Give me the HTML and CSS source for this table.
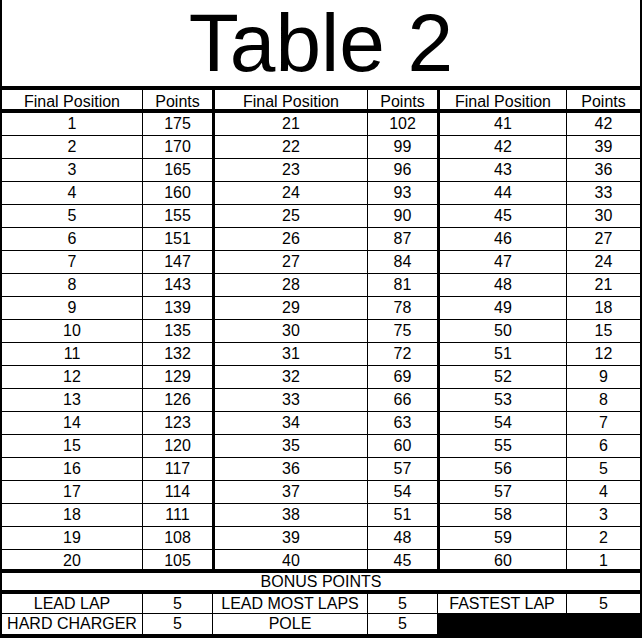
FILE: index.html
```html
<!DOCTYPE html>
<html>
<head>
<meta charset="utf-8">
<title>Table 2</title>
<link rel="stylesheet" href="styles.css">
</head>
<body>
<div class="sheet">
  <div class="title"><span class="title-text">Table 2</span></div>
  <div class="grid">
    <div class="cell hd">Final Position</div><div class="cell hd">Points</div><div class="cell hd gl">Final Position</div><div class="cell hd">Points</div><div class="cell hd gl">Final Position</div><div class="cell hd">Points</div>
    <div class="cell">1</div><div class="cell">175</div><div class="cell gl">21</div><div class="cell">102</div><div class="cell gl">41</div><div class="cell">42</div>
    <div class="cell">2</div><div class="cell">170</div><div class="cell gl">22</div><div class="cell">99</div><div class="cell gl">42</div><div class="cell">39</div>
    <div class="cell">3</div><div class="cell">165</div><div class="cell gl">23</div><div class="cell">96</div><div class="cell gl">43</div><div class="cell">36</div>
    <div class="cell">4</div><div class="cell">160</div><div class="cell gl">24</div><div class="cell">93</div><div class="cell gl">44</div><div class="cell">33</div>
    <div class="cell">5</div><div class="cell">155</div><div class="cell gl">25</div><div class="cell">90</div><div class="cell gl">45</div><div class="cell">30</div>
    <div class="cell">6</div><div class="cell">151</div><div class="cell gl">26</div><div class="cell">87</div><div class="cell gl">46</div><div class="cell">27</div>
    <div class="cell">7</div><div class="cell">147</div><div class="cell gl">27</div><div class="cell">84</div><div class="cell gl">47</div><div class="cell">24</div>
    <div class="cell">8</div><div class="cell">143</div><div class="cell gl">28</div><div class="cell">81</div><div class="cell gl">48</div><div class="cell">21</div>
    <div class="cell">9</div><div class="cell">139</div><div class="cell gl">29</div><div class="cell">78</div><div class="cell gl">49</div><div class="cell">18</div>
    <div class="cell">10</div><div class="cell">135</div><div class="cell gl">30</div><div class="cell">75</div><div class="cell gl">50</div><div class="cell">15</div>
    <div class="cell">11</div><div class="cell">132</div><div class="cell gl">31</div><div class="cell">72</div><div class="cell gl">51</div><div class="cell">12</div>
    <div class="cell">12</div><div class="cell">129</div><div class="cell gl">32</div><div class="cell">69</div><div class="cell gl">52</div><div class="cell">9</div>
    <div class="cell">13</div><div class="cell">126</div><div class="cell gl">33</div><div class="cell">66</div><div class="cell gl">53</div><div class="cell">8</div>
    <div class="cell">14</div><div class="cell">123</div><div class="cell gl">34</div><div class="cell">63</div><div class="cell gl">54</div><div class="cell">7</div>
    <div class="cell">15</div><div class="cell">120</div><div class="cell gl">35</div><div class="cell">60</div><div class="cell gl">55</div><div class="cell">6</div>
    <div class="cell">16</div><div class="cell">117</div><div class="cell gl">36</div><div class="cell">57</div><div class="cell gl">56</div><div class="cell">5</div>
    <div class="cell">17</div><div class="cell">114</div><div class="cell gl">37</div><div class="cell">54</div><div class="cell gl">57</div><div class="cell">4</div>
    <div class="cell">18</div><div class="cell">111</div><div class="cell gl">38</div><div class="cell">51</div><div class="cell gl">58</div><div class="cell">3</div>
    <div class="cell">19</div><div class="cell">108</div><div class="cell gl">39</div><div class="cell">48</div><div class="cell gl">59</div><div class="cell">2</div>
    <div class="cell last">20</div><div class="cell last">105</div><div class="cell last gl">40</div><div class="cell last">45</div><div class="cell last gl">60</div><div class="cell last">1</div>
    <div class="cell bonus">BONUS POINTS</div>
    <div class="cell b1">LEAD LAP</div><div class="cell b1">5</div><div class="cell b1">LEAD MOST LAPS</div><div class="cell b1">5</div><div class="cell b1">FASTEST LAP</div><div class="cell b1">5</div>
    <div class="cell b2">HARD CHARGER</div><div class="cell b2">5</div><div class="cell b2">POLE</div><div class="cell b2">5</div>
  </div>
</div>
</body>
</html>
```

FILE: styles.css
```css
html, body {
  margin: 0;
  padding: 0;
  background: #ffffff;
}

.sheet {
  width: 642px;
  height: 638px;
  font-family: "Liberation Sans", Arial, sans-serif;
  color: #000;
  overflow: hidden;
}

.title {
  height: 86px;
  box-sizing: border-box;
  border-left: 2px solid #000;
  border-right: 2px solid #000;
  background: #fff;
  display: flex;
  justify-content: center;
  align-items: flex-start;
  padding-top: 2px;
}

.title-text {
  font-size: 82px;
  line-height: 82px;
  white-space: nowrap;
}

.grid {
  display: grid;
  background: #000;
  padding: 4px 2px 4px 2px;
  grid-template-columns: 140px 69px 154px 69px 128px 73px;
  grid-template-rows: 22px repeat(19, 22px) 22px 20px 19px 20px;
  column-gap: 1px;
  row-gap: 1px;
  height: 552px;
  box-sizing: border-box;
}

.cell {
  background: #fff;
  font-size: 16px;
  line-height: 22px;
  text-align: center;
  white-space: nowrap;
}

.gl {
  margin-left: 2px;
}

.hd {
  margin-bottom: 3px;
  line-height: 19px;
  padding-top: 2px;
  height: 19px;
  box-sizing: border-box;
}

.last {
  margin-bottom: 3px;
  height: 19px;
}

.bonus {
  grid-column: 1 / -1;
  margin-bottom: 3px;
  line-height: 17px;
}

.b1 {
  line-height: 19px;
}

.b2 {
  line-height: 20px;
}
```
